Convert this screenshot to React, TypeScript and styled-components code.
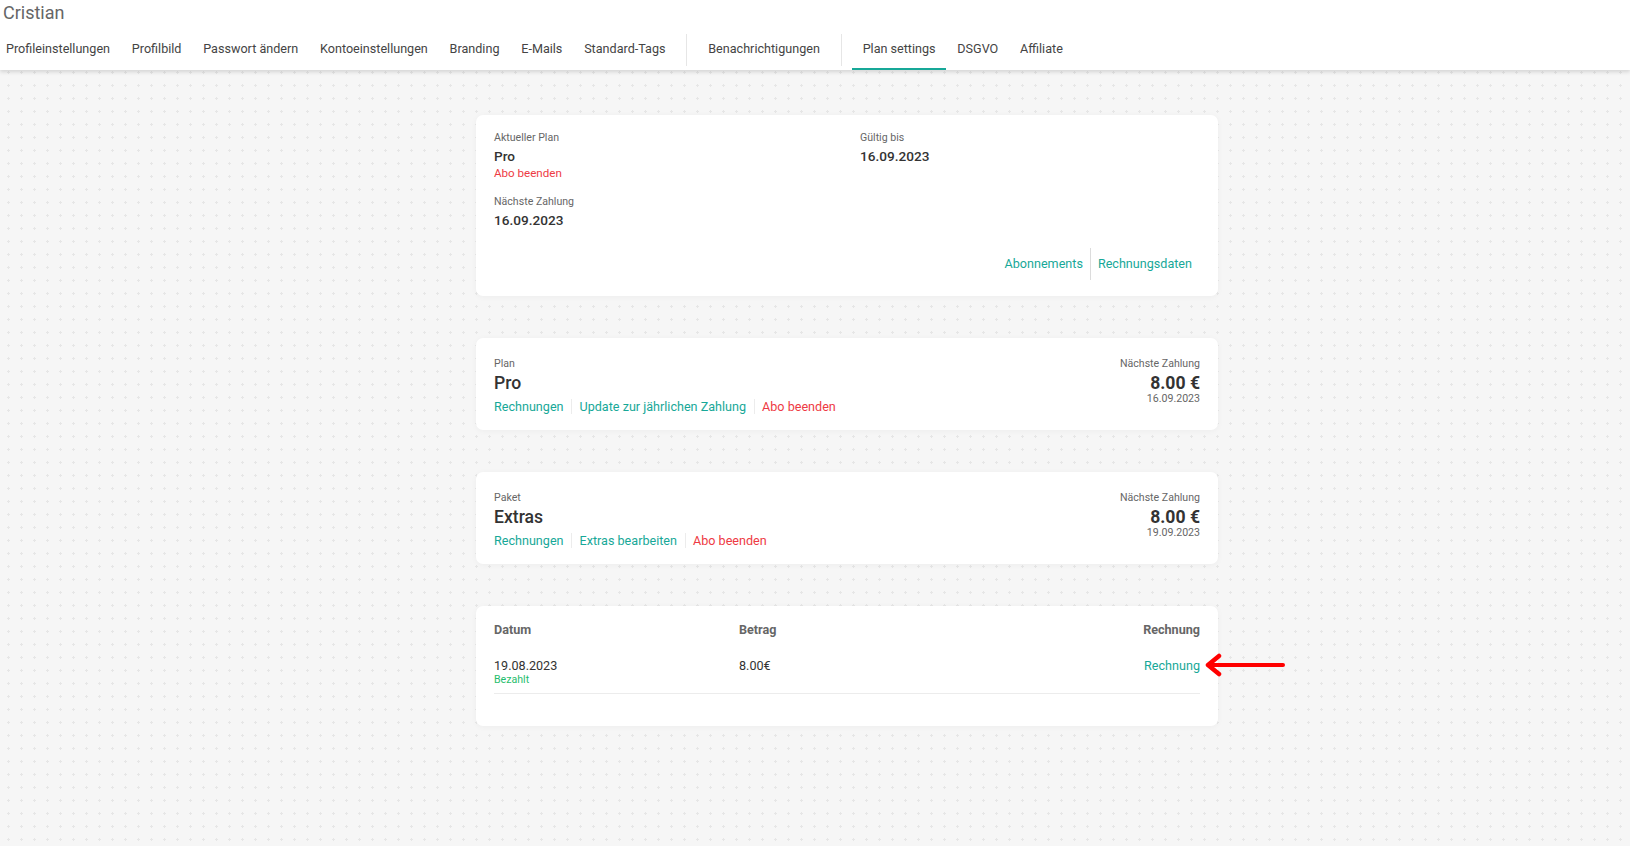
import React from 'react';
import styled, { createGlobalStyle } from 'styled-components';

const GlobalStyle = createGlobalStyle`
  html, body {
    margin: 0;
    padding: 0;
  }
  body {
    font-family: Roboto, 'Liberation Sans', sans-serif;
    background-color: #f6f6f6;
    background-image: radial-gradient(circle, #e6e6e6 1px, transparent 1.2px);
    background-size: 13px 13px;
    background-position: 2px 1px;
    min-height: 846px;
    color: #333;
  }
`;

const TEAL = '#17a898';
const RED = '#ee3a44';
const GREEN = '#1fbd6d';

const Header = styled.header`
  background: #fff;
  box-shadow: 0 2px 4px rgba(0, 0, 0, 0.14);
  position: relative;
  z-index: 1;
`;

const UserName = styled.div`
  font-size: 18px;
  color: #666;
  padding: 2px 0 0 3px;
  height: 26px;
  line-height: 22px;
`;

const Tabs = styled.nav`
  display: flex;
  align-items: stretch;
  height: 42px;
`;

const Tab = styled.div<{ $active?: boolean }>`
  display: flex;
  align-items: center;
  padding: 0 10.9px;
  font-size: 12.6px;
  color: #444;
  border-bottom: 2px solid ${p => (p.$active ? TEAL : 'transparent')};
  white-space: nowrap;
  &:first-child {
    padding-left: 6px;
  }
`;

const TabDivider = styled.div`
  width: 1px;
  background: #e6e6e6;
  margin: 6px 10px 4px;
`;

const Main = styled.main`
  display: flex;
  flex-direction: column;
  align-items: center;
  padding: 45px 0 80px 64px;
  gap: 42px;
`;

const Card = styled.section`
  position: relative;
  width: 706px;
  background: #fff;
  border-radius: 7px;
  box-shadow: 0 1px 6px rgba(0, 0, 0, 0.04);
  padding: 14px 18px 16px;
`;

const InfoGrid = styled.div`
  display: grid;
  grid-template-columns: 1fr 1fr;
  column-gap: 26px;
`;

const InfoColumn = styled.div`
  display: flex;
  flex-direction: column;
  gap: 13px;
`;

const Field = styled.div`
  display: flex;
  flex-direction: column;
`;

const Label = styled.div`
  font-size: 10.6px;
  color: #666;
  line-height: 17px;
`;

const Value = styled.div`
  font-size: 13.6px;
  font-weight: 500;
  color: #333;
  line-height: 20px;
`;

const InlineLink = styled.a<{ $danger?: boolean }>`
  font-size: 11.6px;
  line-height: 14px;
  color: ${p => (p.$danger ? RED : TEAL)};
  text-decoration: none;
`;

const LinkBar = styled.div<{ $align?: 'start' | 'end' }>`
  display: flex;
  justify-content: ${p => (p.$align === 'end' ? 'flex-end' : 'flex-start')};
  align-items: stretch;
`;

const BarLink = styled.a<{ $danger?: boolean; $tall?: boolean }>`
  font-size: 12.6px;
  color: ${p => (p.$danger ? RED : TEAL)};
  text-decoration: none;
  display: flex;
  align-items: center;
  padding: ${p => (p.$tall ? '7px 7px' : '0 7.5px')};
  border-left: 1px solid ${p => (p.$tall ? '#dcdcdc' : '#ececec')};
  line-height: ${p => (p.$tall ? '18px' : '15px')};
  &:first-child {
    border-left: none;
    padding-left: ${p => (p.$tall ? '7px' : '0')};
  }
`;

const FooterLinks = styled(LinkBar)`
  margin-top: 18px;
  margin-right: 1px;
`;

const SubRow = styled.div`
  display: flex;
  justify-content: space-between;
  align-items: flex-start;
`;

const SubLeft = styled.div`
  display: flex;
  flex-direction: column;
`;

const SubRight = styled.div`
  display: flex;
  flex-direction: column;
  align-items: flex-end;
`;

const SubCard = styled(Card)`
  padding: 17px 18px 16px;
`;

const Title = styled.div`
  font-size: 17.6px;
  font-weight: 500;
  color: #333;
  line-height: 22px;
  margin-bottom: 5px;
`;

const Amount = styled.div`
  font-size: 17.6px;
  font-weight: 700;
  color: #333;
  line-height: 22px;
`;

const SmallDate = styled.div`
  font-size: 10.6px;
  color: #666;
  line-height: 10px;
`;

const Table = styled.div`
  display: grid;
  grid-template-columns: 245px 1fr auto;
`;

const HeadCell = styled.div<{ $right?: boolean }>`
  font-size: 12.6px;
  font-weight: 700;
  color: #666;
  text-align: ${p => (p.$right ? 'right' : 'left')};
  padding: 2px 0 20px;
  line-height: 16px;
`;

const Cell = styled.div<{ $right?: boolean }>`
  font-size: 12.6px;
  font-weight: 400;
  color: #333;
  text-align: ${p => (p.$right ? 'right' : 'left')};
  padding-bottom: 7px;
  border-bottom: 1px solid #ececec;
  line-height: 15px;
`;

const RowLink = styled.a`
  color: ${TEAL};
  text-decoration: none;
  font-size: 12.6px;
`;

const Paid = styled.div`
  font-size: 10.6px;
  color: ${GREEN};
  line-height: 13px;
`;

const TableSpacer = styled.div`
  height: 16px;
`;

const Arrow = styled.svg`
  position: absolute;
  left: 729px;
  top: 47px;
`;

const tabs = [
  'Profileinstellungen',
  'Profilbild',
  'Passwort ändern',
  'Kontoeinstellungen',
  'Branding',
  'E-Mails',
  'Standard-Tags',
];

type SubProps = {
  label: string;
  title: string;
  links: { text: string; danger?: boolean }[];
  date: string;
};

const SubscriptionCard: React.FC<SubProps> = ({ label, title, links, date }) => (
  <SubCard>
    <SubRow>
      <SubLeft>
        <Label>{label}</Label>
        <Title>{title}</Title>
        <LinkBar>
          {links.map(l => (
            <BarLink key={l.text} $danger={l.danger}>
              {l.text}
            </BarLink>
          ))}
        </LinkBar>
      </SubLeft>
      <SubRight>
        <Label>Nächste Zahlung</Label>
        <Amount>8.00 €</Amount>
        <SmallDate>{date}</SmallDate>
      </SubRight>
    </SubRow>
  </SubCard>
);

const App: React.FC = () => {
  return (
    <>
      <GlobalStyle />
      <Header>
        <UserName>Cristian</UserName>
        <Tabs>
          {tabs.map(t => (
            <Tab key={t}>{t}</Tab>
          ))}
          <TabDivider />
          <Tab>Benachrichtigungen</Tab>
          <TabDivider />
          <Tab $active>Plan settings</Tab>
          <Tab>DSGVO</Tab>
          <Tab>Affiliate</Tab>
        </Tabs>
      </Header>

      <Main>
        <Card>
          <InfoGrid>
            <InfoColumn>
              <Field>
                <Label>Aktueller Plan</Label>
                <Value>Pro</Value>
                <InlineLink $danger>Abo beenden</InlineLink>
              </Field>
              <Field>
                <Label>Nächste Zahlung</Label>
                <Value>16.09.2023</Value>
              </Field>
            </InfoColumn>
            <InfoColumn>
              <Field>
                <Label>Gültig bis</Label>
                <Value>16.09.2023</Value>
              </Field>
            </InfoColumn>
          </InfoGrid>
          <FooterLinks $align="end">
            <BarLink $tall>Abonnements</BarLink>
            <BarLink $tall>Rechnungsdaten</BarLink>
          </FooterLinks>
        </Card>

        <SubscriptionCard
          label="Plan"
          title="Pro"
          date="16.09.2023"
          links={[
            { text: 'Rechnungen' },
            { text: 'Update zur jährlichen Zahlung' },
            { text: 'Abo beenden', danger: true },
          ]}
        />

        <SubscriptionCard
          label="Paket"
          title="Extras"
          date="19.09.2023"
          links={[
            { text: 'Rechnungen' },
            { text: 'Extras bearbeiten' },
            { text: 'Abo beenden', danger: true },
          ]}
        />

        <Card>
          <Table>
            <HeadCell>Datum</HeadCell>
            <HeadCell>Betrag</HeadCell>
            <HeadCell $right>Rechnung</HeadCell>
            <Cell>
              19.08.2023
              <Paid>Bezahlt</Paid>
            </Cell>
            <Cell>8.00€</Cell>
            <Cell $right>
              <RowLink>Rechnung</RowLink>
            </Cell>
          </Table>
          <TableSpacer />
          <Arrow width="80" height="24" viewBox="0 0 80 24">
            <path
              d="M78 12 L4 12"
              stroke="#f00"
              strokeWidth="4"
              strokeLinecap="round"
              fill="none"
            />
            <path
              d="M14 3 L3 12 L14 21"
              stroke="#f00"
              strokeWidth="4.5"
              strokeLinecap="round"
              strokeLinejoin="round"
              fill="none"
            />
          </Arrow>
        </Card>
      </Main>
    </>
  );
};

export default App;
